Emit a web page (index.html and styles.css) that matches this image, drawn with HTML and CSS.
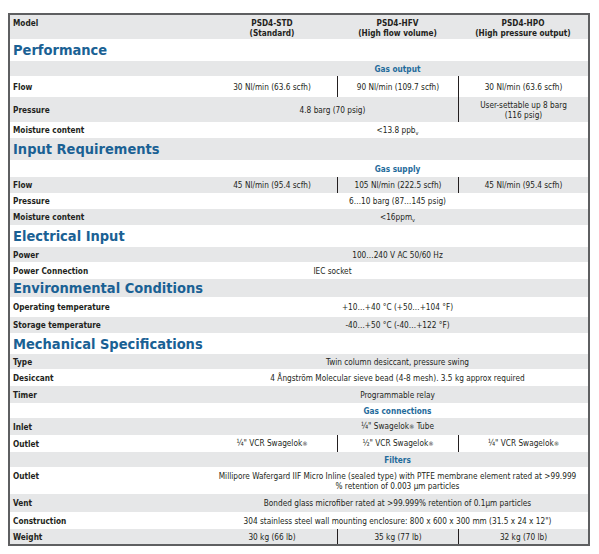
FILE: index.html
```html
<!DOCTYPE html>
<html lang="en">
<head>
<meta charset="utf-8">
<title>PSD4 Specifications</title>
<link rel="stylesheet" href="styles.css">
</head>
<body>
<table class="spec">
  <colgroup>
    <col class="c-label"><col class="c-1"><col class="c-2"><col class="c-3">
  </colgroup>
  <tr class="alt h24 head">
    <th class="lbl">Model</th>
    <th>PSD4-STD<br>(Standard)</th>
    <th>PSD4-HFV<br>(High flow volume)</th>
    <th>PSD4-HPO<br>(High pressure output)</th>
  </tr>
  <tr class="h22"><td class="sec" colspan="4">Performance</td></tr>
  <tr class="alt h15"><td></td><td class="sub" colspan="3">Gas output</td></tr>
  <tr class="h21">
    <td class="lbl">Flow</td>
    <td>30 Nl/min (63.6 scfh)</td>
    <td class="div">90 Nl/min (109.7 scfh)</td>
    <td class="div">30 Nl/min (63.6 scfh)</td>
  </tr>
  <tr class="alt h25">
    <td class="lbl">Pressure</td>
    <td colspan="2">4.8 barg (70 psig)</td>
    <td class="div">User-settable up 8 barg<br>(116 psig)</td>
  </tr>
  <tr class="h16"><td class="lbl">Moisture content</td><td colspan="3">&lt;13.8 ppb<span class="lo">v</span></td></tr>

  <tr class="alt h22"><td class="sec" colspan="4">Input Requirements</td></tr>
  <tr class="h17"><td></td><td class="sub" colspan="3">Gas supply</td></tr>
  <tr class="alt h16">
    <td class="lbl">Flow</td>
    <td>45 Nl/min (95.4 scfh)</td>
    <td class="div">105 Nl/min (222.5 scfh)</td>
    <td class="div">45 Nl/min (95.4 scfh)</td>
  </tr>
  <tr class="h16"><td class="lbl">Pressure</td><td colspan="3">6…10 barg (87…145 psig)</td></tr>
  <tr class="alt h16"><td class="lbl">Moisture content</td><td colspan="3">&lt;16ppm<span class="lo">v</span></td></tr>

  <tr class="h22"><td class="sec" colspan="4">Electrical Input</td></tr>
  <tr class="alt h15"><td class="lbl">Power</td><td colspan="3">100…240 V AC 50/60 Hz</td></tr>
  <tr class="h17"><td class="lbl">Power Connection</td><td colspan="2">IEC socket</td><td></td></tr>

  <tr class="alt h18"><td class="sec" colspan="4">Environmental Conditions</td></tr>
  <tr class="h20"><td class="lbl">Operating temperature</td><td colspan="3">+10…+40 °C (+50…+104 °F)</td></tr>
  <tr class="alt h16"><td class="lbl">Storage temperature</td><td colspan="3">-40…+50 °C (-40…+122 °F)</td></tr>

  <tr class="h21"><td class="sec" colspan="4">Mechanical Specifications</td></tr>
  <tr class="alt h15"><td class="lbl">Type</td><td colspan="3">Twin column desiccant, pressure swing</td></tr>
  <tr class="h17"><td class="lbl">Desiccant</td><td colspan="3">4 Ångström Molecular sieve bead (4-8 mesh). 3.5 kg approx required</td></tr>
  <tr class="alt h17"><td class="lbl">Timer</td><td colspan="3">Programmable relay</td></tr>
  <tr class="h15"><td></td><td class="sub" colspan="3">Gas connections</td></tr>
  <tr class="alt h17"><td class="lbl">Inlet</td><td colspan="3">¼" Swagelok<span class="reg">®</span> Tube</td></tr>
  <tr class="h17">
    <td class="lbl">Outlet</td>
    <td>¼" VCR Swagelok<span class="reg">®</span></td>
    <td class="div">½" VCR Swagelok<span class="reg">®</span></td>
    <td class="div">¼" VCR Swagelok<span class="reg">®</span></td>
  </tr>
  <tr class="alt h15"><td></td><td class="sub" colspan="3">Filters</td></tr>
  <tr class="h27 top">
    <td class="lbl">Outlet</td>
    <td colspan="3">Millipore Wafergard IIF Micro Inline (sealed type) with PTFE membrane element rated at &gt;99.999<br>% retention of 0.003 µm particles</td>
  </tr>
  <tr class="alt h18"><td class="lbl">Vent</td><td colspan="3">Bonded glass microfiber rated at &gt;99.999% retention of 0.1µm particles</td></tr>
  <tr class="h17"><td class="lbl">Construction</td><td colspan="3">304 stainless steel wall mounting enclosure: 800 x 600 x 300 mm (31.5 x 24 x 12")</td></tr>
  <tr class="alt h15">
    <td class="lbl">Weight</td>
    <td>30 kg (66 lb)</td>
    <td class="div">35 kg (77 lb)</td>
    <td class="div">32 kg (70 lb)</td>
  </tr>
</table>
</body>
</html>
```

FILE: styles.css
```css
html, body {
  margin: 0;
  background: #ffffff;
}

body {
  padding: 13px 0 0 8px;
  font-family: "DejaVu Sans Condensed", "DejaVu Sans", sans-serif;
  color: #231f20;
}

.spec {
  border-collapse: separate;
  border-spacing: 0;
  table-layout: fixed;
  width: 582px;
  border: 2px solid #5e5f61;
}

.c-label { width: 197px; }
.c-1 { width: 130px; }
.c-2 { width: 121px; }
.c-3 { width: 130px; }

.spec td,
.spec th {
  padding: 0 3px;
  font-size: 8.2px;
  line-height: 10px;
  text-align: center;
  vertical-align: middle;
  white-space: nowrap;
}

.spec th {
  font-weight: bold;
  vertical-align: top;
  padding-top: 3px;
}

.spec .lbl {
  text-align: left;
  font-weight: bold;
}

.spec .sec {
  font-size: 14.5px;
  line-height: 16px;
  font-weight: bold;
  color: #1a6194;
  text-align: left;
}

.spec .sub {
  font-weight: bold;
  color: #1f6b9b;
}

.spec .div {
  border-left: 1px solid #231f20;
}

.alt { background: #e6e7e8; }

.top .lbl { vertical-align: top; padding-top: 4px; }

.lo {
  display: inline-block;
  font-size: 5.5px;
  line-height: 5px;
  transform: translateY(2px);
}

.reg {
  font-size: 6px;
}

.h15 { height: 15px; }
.h16 { height: 16px; }
.h17 { height: 17px; }
.h18 { height: 18px; }
.h20 { height: 20px; }
.h21 { height: 21px; }
.h22 { height: 22px; }
.h24 { height: 24px; }
.h25 { height: 25px; }
.h27 { height: 27px; }
```
